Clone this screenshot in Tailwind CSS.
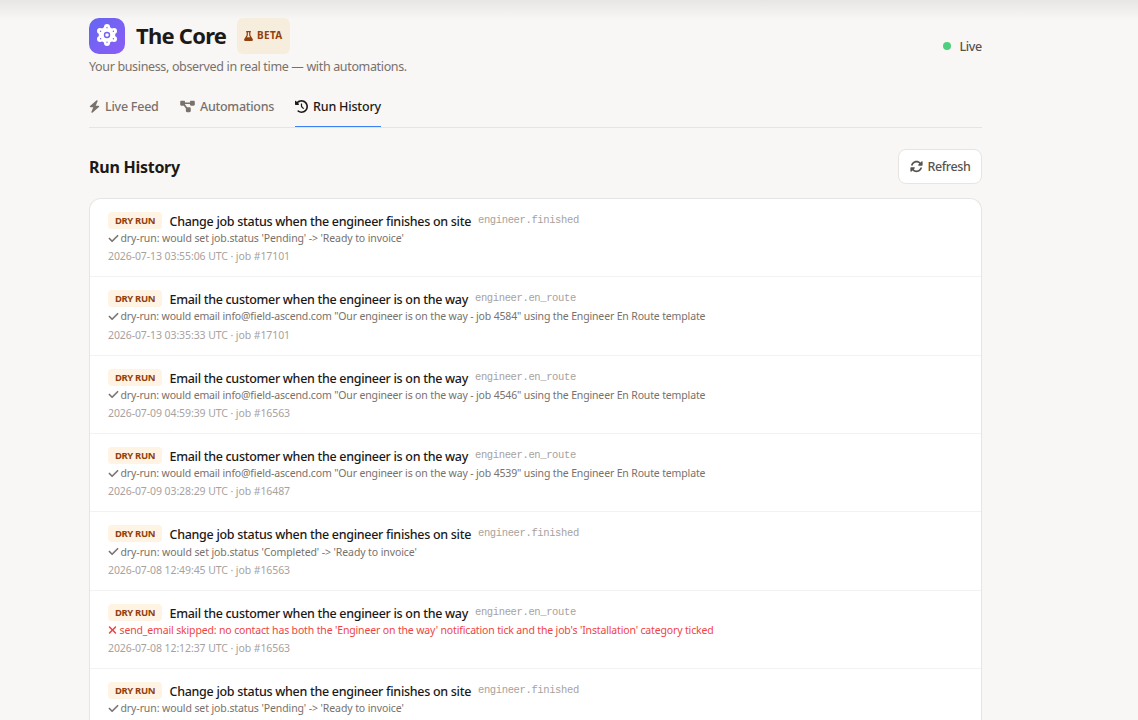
<!DOCTYPE html>
<html lang="en">
<head>
    <meta charset="UTF-8">
    <meta name="viewport" content="width=device-width, initial-scale=1.0">
    <title>The Core - Run History</title>
    <script src="https://cdn.jsdelivr.net/npm/@tailwindcss/browser@4"></script>
</head>
<body class="bg-[#f8f7f5] font-['Segoe_UI','Noto_Sans',sans-serif] text-[#1c1917] h-screen overflow-hidden">
    <div class="h-full overflow-hidden bg-linear-to-b from-[#e7e6e4] to-[#f8f7f5] to-[20px] pl-[89px] pt-[18px]">
        <div class="w-[893px]">
            <!-- Header -->
            <header class="flex justify-between items-start h-[59px]">
                <div>
                    <div class="flex h-9">
                        <div class="size-9 rounded-[10px] bg-linear-to-br from-[#6366f1] to-[#8b5cf6] flex items-center justify-center">
                            <svg class="size-6 -mt-[2px]" viewBox="0 0 24 24" fill="#fff">
                                <circle cx="12" cy="12" r="8.3"/>
                                <circle cx="12" cy="4" r="3"/>
                                <circle cx="12" cy="20" r="3"/>
                                <circle cx="5" cy="8" r="3"/>
                                <circle cx="19" cy="8" r="3"/>
                                <circle cx="5" cy="16" r="3"/>
                                <circle cx="19" cy="16" r="3"/>
                                <g fill="#7660f3">
                                    <circle cx="12" cy="4.8" r=".7"/>
                                    <circle cx="12" cy="19.2" r=".7"/>
                                    <circle cx="5.6" cy="8.3" r=".7"/>
                                    <circle cx="18.4" cy="8.3" r=".7"/>
                                    <circle cx="5.6" cy="15.7" r=".7"/>
                                    <circle cx="18.4" cy="15.7" r=".7"/>
                                </g>
                                <circle cx="12" cy="12" r="2.5" fill="none" stroke="#7660f3" stroke-width="1.4"/>
                            </svg>
                        </div>
                        <h1 class="ml-[11px] w-[90px] text-[22px] leading-[35px] font-bold tracking-[-0.76px] whitespace-nowrap">The Core</h1>
                        <span class="ml-[11px] w-[53px] rounded-md bg-[#f7eddc] text-[#92400e] flex items-center pl-[7px] pb-px text-[10px] font-bold tracking-[0.35px]">
                            <svg class="w-[9px] h-[10px] mr-1" viewBox="0 0 448 512" fill="currentColor"><path d="M288 0H160 128C110.3 0 96 14.3 96 32s14.3 32 32 32V196.8c0 11.8-3.3 23.5-9.5 33.5L10.3 406.2C3.6 417.2 0 429.7 0 442.6C0 480.9 31.1 512 69.4 512H378.6c38.3 0 69.4-31.1 69.4-69.4c0-12.8-3.6-25.4-10.3-36.4L329.5 230.4c-6.2-10.1-9.5-21.7-9.5-33.5V64c17.7 0 32-14.3 32-32s-14.3-32-32-32H288zM192 196.8V64h64V196.8c0 23.7 6.6 46.9 19 67.1L309.5 320h-171L173 263.9c12.4-20.2 19-43.4 19-67.1z"/></svg>
                            BETA
                        </span>
                    </div>
                    <p class="mt-[2px] text-[12.5px] leading-[21px] tracking-[-0.35px] text-[#78716c]">Your business, observed in real time — with automations.</p>
                </div>
                <div class="h-[57px] flex items-center gap-2 text-[12.5px] font-medium tracking-[-0.3px] text-[#57534e]">
                    <span class="size-2 -mt-px rounded-full bg-[#4fcf7e]"></span><span class="pt-[2px]">Live</span>
                </div>
            </header>

            <!-- Tabs -->
            <nav class="mt-2 h-[43px] flex border-b border-[#e5e4e2] text-[12.5px] font-medium text-[#78716c] whitespace-nowrap">
                <a href="#" class="w-[91px] flex items-center tracking-[-0.24px]">
                    <svg class="w-[11px] h-[13px] mr-[5px]" viewBox="0 0 448 512" fill="currentColor"><path d="M349.4 44.6c5.9-13.7 1.5-29.7-10.6-38.5s-28.6-8-39.9 1.8l-256 224c-10 8.8-13.6 22.9-8.9 35.3S50.7 288 64 288H175.5L98.6 467.4c-5.9 13.7-1.5 29.7 10.6 38.5s28.6 8 39.9-1.8l256-224c10-8.8 13.6-22.9 8.9-35.3s-16.6-20.7-30-20.7H272.5L349.4 44.6z"/></svg>
                    <span class="pt-[2px]">Live Feed</span>
                </a>
                <a href="#" class="w-[115px] flex items-center tracking-[-0.28px]">
                    <svg class="w-[15px] h-[13px] mr-[5px]" viewBox="0 0 576 512" fill="currentColor"><path d="M0 80C0 53.5 21.5 32 48 32h96c26.5 0 48 21.5 48 48V96H384V80c0-26.5 21.5-48 48-48h96c26.5 0 48 21.5 48 48v96c0 26.5-21.5 48-48 48H432c-26.5 0-48-21.5-48-48V160H192v16c0 1.7-.1 3.4-.3 5L272 288h96c26.5 0 48 21.5 48 48v96c0 26.5-21.5 48-48 48H272c-26.5 0-48-21.5-48-48V336c0-1.7 .1-3.4 .3-5L144 224H48c-26.5 0-48-21.5-48-48V80z"/></svg>
                    <span class="pt-[2px]">Automations</span>
                </a>
                <a href="#" class="w-[86px] h-[42px] flex items-center pt-px tracking-[-0.18px] text-[#1c1917] border-b border-b-[#3b82f6]">
                    <svg class="size-[13px] mr-[5px] shrink-0" viewBox="0 0 512 512" fill="currentColor"><path d="M75 75L41 41C25.9 25.9 0 36.6 0 57.9V168c0 13.3 10.7 24 24 24H134.1c21.4 0 32.1-25.9 17-41l-30.8-30.8C155 85.5 203 64 256 64c106 0 192 86 192 192s-86 192-192 192c-40.8 0-78.6-12.7-109.7-34.4c-14.5-10.1-34.4-6.6-44.6 7.9s-6.6 34.4 7.9 44.6C151.2 495 201.7 512 256 512c141.4 0 256-114.6 256-256S397.4 0 256 0C185.3 0 121.3 28.7 75 75zm181 53c-13.3 0-24 10.7-24 24V256c0 6.4 2.5 12.5 7 17l72 72c9.4 9.4 24.6 9.4 33.9 0s9.4-24.6 0-33.9l-65-65V152c0-13.3-10.7-24-24-24z"/></svg>
                    <span class="pt-[2px]">Run History</span>
                </a>
            </nav>

            <!-- Section heading -->
            <div class="mt-[21px] h-[35px] flex items-center justify-between">
                <h2 class="text-base font-bold tracking-[-0.26px]">Run History</h2>
                <button class="w-[84px] h-[35px] rounded-lg border border-[#e7e5e4] bg-white flex items-center pl-[11px] text-[12.5px] font-medium tracking-[-0.4px] text-[#57534e]">
                    <svg class="size-[13px] mr-[4.5px] -mt-px" viewBox="0 0 512 512" fill="currentColor"><path d="M142.9 142.9c62.2-62.2 162.7-62.5 225.3-1L327 183c-6.9 6.9-8.9 17.2-5.2 26.2s12.5 14.8 22.2 14.8H472c13.3 0 24-10.7 24-24V72c0-9.7-5.8-18.5-14.8-22.2s-19.3-1.7-26.2 5.2L413.4 96.6c-87.6-86.5-228.7-86.2-315.8 1C73.2 122 55.6 150.7 44.8 181.4c-5.9 16.7 2.9 34.9 19.5 40.8s34.9-2.9 40.8-19.5c7.7-21.8 20.2-42.3 37.8-59.8zM16 312V440c0 9.7 5.8 18.5 14.8 22.2s19.3 1.7 26.2-5.2l41.6-41.6c87.6 86.5 228.7 86.2 315.8-1c24.4-24.4 42.1-53.1 52.9-83.7c5.9-16.7-2.9-34.9-19.5-40.8s-34.9 2.9-40.8 19.5c-7.7 21.8-20.2 42.3-37.8 59.8c-62.2 62.2-162.7 62.5-225.3 1L185 329c6.9-6.9 8.9-17.2 5.2-26.2s-12.5-14.8-22.2-14.8H40c-13.3 0-24 10.7-24 24z"/></svg>
                    <span class="pt-[2px]">Refresh</span>
                </button>
            </div>

            <!-- Runs -->
            <div id="runs" class="mt-[14px] h-[550px] rounded-t-xl border border-b-0 border-[#e7e5e4] bg-white overflow-hidden"></div>
        </div>
    </div>

    <script>
        const finished = { title: 'Change job status when the engineer finishes on site', event: 'engineer.finished', width: 'w-[302px] tracking-[-0.29px]', tracking: 'tracking-[-0.1px]' };
        const enRoute = { title: 'Email the customer when the engineer is on the way', event: 'engineer.en_route', width: 'w-[299px] tracking-[-0.3px]', tracking: 'tracking-[-0.15px]' };
        const email = job => `dry-run: would email info@field-ascend.com "Our engineer is on the way - job ${job}" using the Engineer En Route template`;

        const runs = [
            { ...finished, text: "dry-run: would set job.status 'Pending' -> 'Ready to invoice'", meta: '2026-07-13 03:55:06 UTC · job #17101' },
            { ...enRoute, text: email(4584), meta: '2026-07-13 03:35:33 UTC · job #17101' },
            { ...enRoute, text: email(4546), meta: '2026-07-09 04:59:39 UTC · job #16563' },
            { ...enRoute, text: email(4539), meta: '2026-07-09 03:28:29 UTC · job #16487' },
            { ...finished, text: "dry-run: would set job.status 'Completed' -> 'Ready to invoice'", meta: '2026-07-08 12:49:45 UTC · job #16563' },
            { ...enRoute, failed: true, text: "send_email skipped: no contact has both the 'Engineer on the way' notification tick and the job's 'Installation' category ticked", meta: '2026-07-08 12:12:37 UTC · job #16563' },
            { ...finished, text: "dry-run: would set job.status 'Pending' -> 'Ready to invoice'" },
        ];

        const okIcon = '<svg class="w-[11px] h-[11px] mr-[2px] -mt-[2px] -ml-[0.5px]" viewBox="0 0 448 512" fill="currentColor" stroke="currentColor" stroke-width="8"><path d="M438.6 105.4c12.5 12.5 12.5 32.8 0 45.3l-256 256c-12.5 12.5-32.8 12.5-45.3 0l-128-128c-12.5-12.5-12.5-32.8 0-45.3s32.8-12.5 45.3 0L160 338.7 393.4 105.4c12.5-12.5 32.8-12.5 45.3 0z"/></svg>';
        const failIcon = '<svg class="w-[9px] h-[12px] mr-[3px] -mt-px -ml-[0.5px]" viewBox="0 0 384 512" fill="currentColor"><path d="M342.6 150.6c12.5-12.5 12.5-32.8 0-45.3s-32.8-12.5-45.3 0L192 210.7 86.6 105.4c-12.5-12.5-32.8-12.5-45.3 0s-12.5 32.8 0 45.3L146.7 256 41.4 361.4c-12.5 12.5-12.5 32.8 0 45.3s32.8 12.5 45.3 0L192 301.3 297.4 406.6c12.5 12.5 32.8 12.5 45.3 0s12.5-32.8 0-45.3L237.3 256 342.6 150.6z"/></svg>';

        document.getElementById('runs').innerHTML = runs.map(run => `
            <div class="h-[78.35px] border-b border-[#f3f2f1] pl-[18px] pt-3 whitespace-nowrap">
                <div class="flex h-[19px]">
                    <span class="w-[54px] h-[17px] mt-px rounded bg-[#fff4e3] text-[#92400e] text-[9.5px] leading-[17px] font-bold text-center tracking-[-0.36px]">DRY RUN</span>
                    <span class="ml-[7.5px] ${run.width} text-[12.5px] leading-[21px] font-medium">${run.title}</span>
                    <span class="ml-[6.5px] font-['Consolas','Liberation_Mono',monospace] text-[10.5px] leading-[19px] tracking-[-0.37px] text-[#a8a29e]">${run.event}</span>
                </div>
                <div class="flex items-center h-[18px] text-[10.5px] ${run.tracking} ${run.failed ? 'text-[#ef4444]' : 'text-[#78716c]'}">
                    ${run.failed ? failIcon : okIcon}<span>${run.text}</span>
                </div>
                ${run.meta ? `<div class="h-[18px] -mt-[0.6px] leading-[18px] text-[10.5px] tracking-[-0.09px] text-[#a8a29e]">${run.meta}</div>` : ''}
            </div>`).join('');
    </script>
</body>
</html>
